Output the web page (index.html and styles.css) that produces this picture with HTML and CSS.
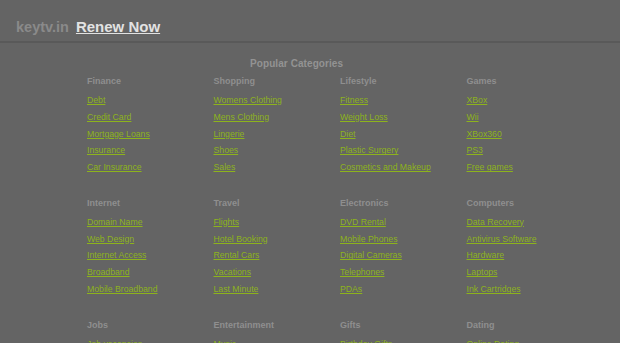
FILE: index.html
```html
<!DOCTYPE html>
<html lang="en">
	<head>
		<meta charset="utf-8">
		<title>keytv.in</title>

		<link rel="stylesheet" href="styles.css">
	</head>

	<body>
		<div class="topbar">
			<span class="domain">keytv.in</span>
			<a href="#" class="renew">Renew Now</a>
		</div>

		<div class="categories">
			<h2>Popular Categories</h2>

			<div class="grid">
				<div class="block">
					<h3>Finance</h3>
					<ul>
						<li><a href="#">Debt</a></li>
						<li><a href="#">Credit Card</a></li>
						<li><a href="#">Mortgage Loans</a></li>
						<li><a href="#">Insurance</a></li>
						<li><a href="#">Car Insurance</a></li>
					</ul>
				</div>
				<div class="block">
					<h3>Shopping</h3>
					<ul>
						<li><a href="#">Womens Clothing</a></li>
						<li><a href="#">Mens Clothing</a></li>
						<li><a href="#">Lingerie</a></li>
						<li><a href="#">Shoes</a></li>
						<li><a href="#">Sales</a></li>
					</ul>
				</div>
				<div class="block">
					<h3>Lifestyle</h3>
					<ul>
						<li><a href="#">Fitness</a></li>
						<li><a href="#">Weight Loss</a></li>
						<li><a href="#">Diet</a></li>
						<li><a href="#">Plastic Surgery</a></li>
						<li><a href="#">Cosmetics and Makeup</a></li>
					</ul>
				</div>
				<div class="block">
					<h3>Games</h3>
					<ul>
						<li><a href="#">XBox</a></li>
						<li><a href="#">Wii</a></li>
						<li><a href="#">XBox360</a></li>
						<li><a href="#">PS3</a></li>
						<li><a href="#">Free games</a></li>
					</ul>
				</div>

				<div class="block">
					<h3>Internet</h3>
					<ul>
						<li><a href="#">Domain Name</a></li>
						<li><a href="#">Web Design</a></li>
						<li><a href="#">Internet Access</a></li>
						<li><a href="#">Broadband</a></li>
						<li><a href="#">Mobile Broadband</a></li>
					</ul>
				</div>
				<div class="block">
					<h3>Travel</h3>
					<ul>
						<li><a href="#">Flights</a></li>
						<li><a href="#">Hotel Booking</a></li>
						<li><a href="#">Rental Cars</a></li>
						<li><a href="#">Vacations</a></li>
						<li><a href="#">Last Minute</a></li>
					</ul>
				</div>
				<div class="block">
					<h3>Electronics</h3>
					<ul>
						<li><a href="#">DVD Rental</a></li>
						<li><a href="#">Mobile Phones</a></li>
						<li><a href="#">Digital Cameras</a></li>
						<li><a href="#">Telephones</a></li>
						<li><a href="#">PDAs</a></li>
					</ul>
				</div>
				<div class="block">
					<h3>Computers</h3>
					<ul>
						<li><a href="#">Data Recovery</a></li>
						<li><a href="#">Antivirus Software</a></li>
						<li><a href="#">Hardware</a></li>
						<li><a href="#">Laptops</a></li>
						<li><a href="#">Ink Cartridges</a></li>
					</ul>
				</div>

				<div class="block">
					<h3>Jobs</h3>
					<ul>
						<li><a href="#">Job vacancies</a></li>
						<li><a href="#">Part time jobs</a></li>
						<li><a href="#">Career</a></li>
						<li><a href="#">Work from home</a></li>
						<li><a href="#">Recruitment</a></li>
					</ul>
				</div>
				<div class="block">
					<h3>Entertainment</h3>
					<ul>
						<li><a href="#">Music</a></li>
						<li><a href="#">Movies</a></li>
						<li><a href="#">Concerts</a></li>
						<li><a href="#">Tickets</a></li>
						<li><a href="#">Celebrities</a></li>
					</ul>
				</div>
				<div class="block">
					<h3>Gifts</h3>
					<ul>
						<li><a href="#">Birthday Gifts</a></li>
						<li><a href="#">Flowers</a></li>
						<li><a href="#">Gift Baskets</a></li>
						<li><a href="#">Jewelry</a></li>
						<li><a href="#">Gift Cards</a></li>
					</ul>
				</div>
				<div class="block">
					<h3>Dating</h3>
					<ul>
						<li><a href="#">Online Dating</a></li>
						<li><a href="#">Singles</a></li>
						<li><a href="#">Personals</a></li>
						<li><a href="#">Chat</a></li>
						<li><a href="#">Matchmaking</a></li>
					</ul>
				</div>
			</div>
		</div>
	</body>
</html>
```

FILE: styles.css
```css
/* Reset */
* {
	padding: 0;
	margin: 0;
	box-sizing: border-box;
}

body {
	font-family: 'Liberation Sans', Arial, sans-serif;
	background: #646464;
	color: #8c8c8c;
}

/* Top bar with the domain name */
.topbar {
	display: flex;
	align-items: baseline;
	height: 43px;
	padding: 18px 16px 0;
	border-bottom: 2px solid #595959;
	line-height: 17px;
	font-weight: bold;
}

.domain {
	font-size: 14.5px;
	color: #8a8a8a;
	margin-right: 7px;
}

.renew {
	font-size: 15px;
	color: #e2e2e2;
	text-decoration: underline;
}

/* Category listing */
.categories {
	padding: 15px 0 0 87px;
}

.categories h2 {
	padding-left: 163px;
	font-size: 10px;
	line-height: 12px;
	letter-spacing: 0.08px;
	color: #939393;
	margin-bottom: 5px;
}

.grid {
	display: grid;
	grid-template-columns: repeat(4, 126.5px);
	row-gap: 20.6px;
}

.block h3 {
	font-size: 9px;
	line-height: 12px;
	color: #8f8f8f;
	margin-bottom: 4.6px;
}

.block ul {
	list-style: none;
}

.block li {
	font-size: 8.7px;
	line-height: 16.95px;
}

.block a {
	color: #8db31c;
	text-decoration: underline;
}
```
